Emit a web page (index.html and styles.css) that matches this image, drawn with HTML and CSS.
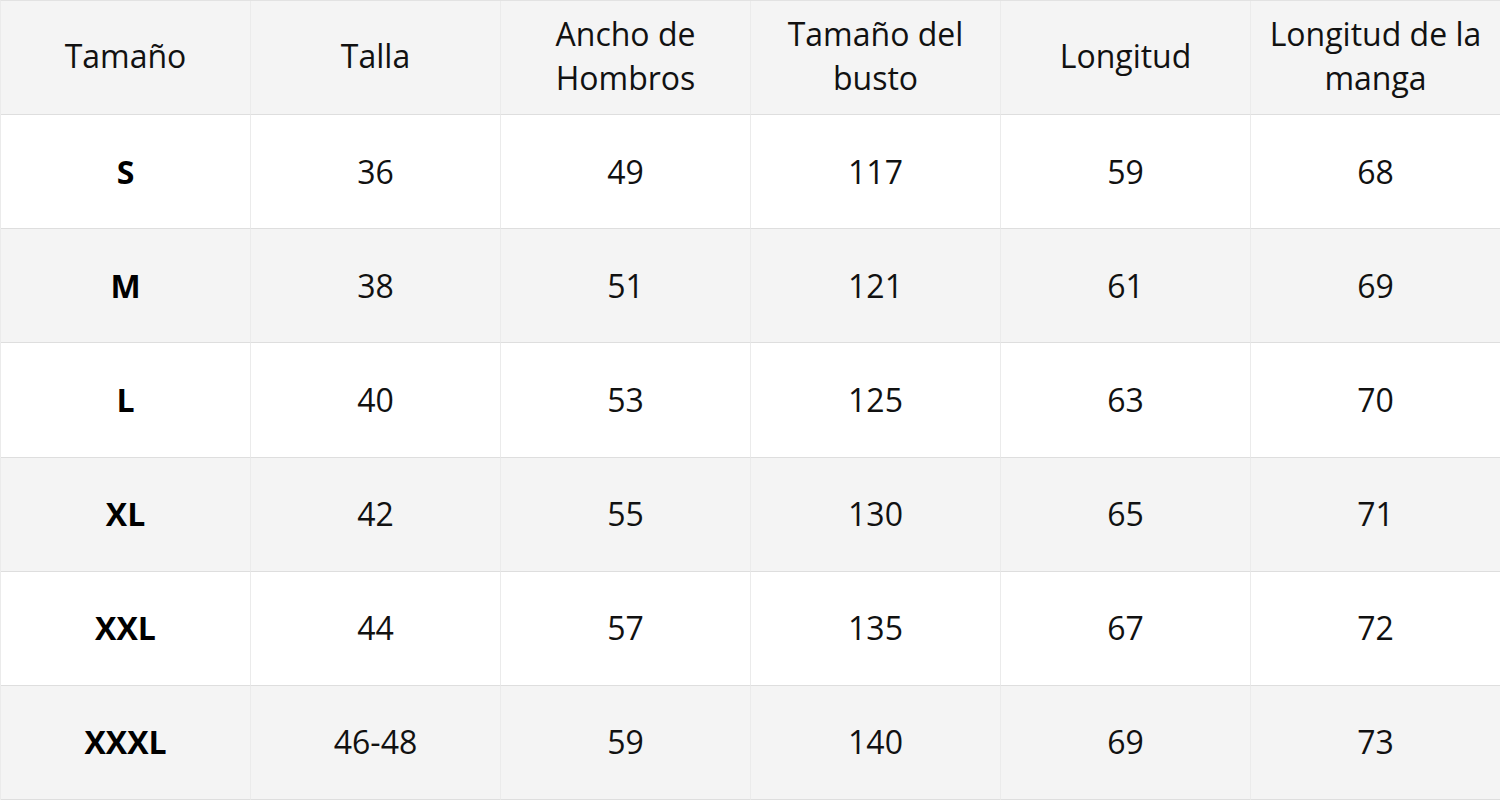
FILE: index.html
```html
<!DOCTYPE html>
<html lang="es">
<head>
<meta charset="utf-8">
<title>Tabla de tallas</title>
<link rel="stylesheet" href="styles.css">
</head>
<body>
<div class="size-table">
  <div class="cell head">Tamaño</div>
  <div class="cell head">Talla</div>
  <div class="cell head">Ancho de<br>Hombros</div>
  <div class="cell head">Tamaño del<br>busto</div>
  <div class="cell head">Longitud</div>
  <div class="cell head">Longitud de la<br>manga</div>

  <div class="cell key">S</div>
  <div class="cell">36</div>
  <div class="cell">49</div>
  <div class="cell">117</div>
  <div class="cell">59</div>
  <div class="cell">68</div>

  <div class="cell key alt">M</div>
  <div class="cell alt">38</div>
  <div class="cell alt">51</div>
  <div class="cell alt">121</div>
  <div class="cell alt">61</div>
  <div class="cell alt">69</div>

  <div class="cell key">L</div>
  <div class="cell">40</div>
  <div class="cell">53</div>
  <div class="cell">125</div>
  <div class="cell">63</div>
  <div class="cell">70</div>

  <div class="cell key alt">XL</div>
  <div class="cell alt">42</div>
  <div class="cell alt">55</div>
  <div class="cell alt">130</div>
  <div class="cell alt">65</div>
  <div class="cell alt">71</div>

  <div class="cell key">XXL</div>
  <div class="cell">44</div>
  <div class="cell">57</div>
  <div class="cell">135</div>
  <div class="cell">67</div>
  <div class="cell">72</div>

  <div class="cell key alt">XXXL</div>
  <div class="cell alt">46-48</div>
  <div class="cell alt">59</div>
  <div class="cell alt">140</div>
  <div class="cell alt">69</div>
  <div class="cell alt">73</div>
</div>
</body>
</html>
```
FILE: styles.css
```css
html, body {
  margin: 0;
  padding: 0;
  background: #ffffff;
}

.size-table {
  display: grid;
  grid-template-columns: repeat(6, 250px);
  grid-template-rows: repeat(7, 1fr);
  width: 1500px;
  height: 800px;
  box-sizing: border-box;
  border-top: 1px solid #e2e2e2;
  border-left: 1px solid #ebebeb;
  font-family: "Open Sans", "Liberation Sans", sans-serif;
  font-size: 32px;
  line-height: 44px;
  color: #111111;
}

.cell {
  display: flex;
  align-items: center;
  justify-content: center;
  text-align: center;
  box-sizing: border-box;
  border-right: 1px solid #ebebeb;
  border-bottom: 1px solid #dedede;
  background: #ffffff;
}

.head,
.alt {
  background: #f4f4f4;
}

.head {
  padding-bottom: 4px;
}

.key {
  font-weight: 700;
  color: #000000;
}
```
